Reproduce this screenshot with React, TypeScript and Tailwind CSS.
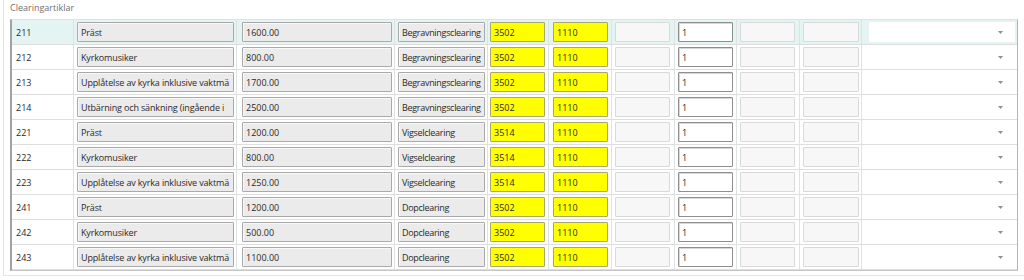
import React from "react";

type Row = { id: string; name: string; price: string; type: string; a: string; b: string };

const rows: Row[] = [
  { id: "211", name: "Präst", price: "1600.00", type: "Begravningsclearing", a: "3502", b: "1110" },
  { id: "212", name: "Kyrkomusiker", price: "800.00", type: "Begravningsclearing", a: "3502", b: "1110" },
  { id: "213", name: "Upplåtelse av kyrka inklusive vaktmä", price: "1700.00", type: "Begravningsclearing", a: "3502", b: "1110" },
  { id: "214", name: "Utbärning och sänkning (ingående i", price: "2500.00", type: "Begravningsclearing", a: "3502", b: "1110" },
  { id: "221", name: "Präst", price: "1200.00", type: "Vigselclearing", a: "3514", b: "1110" },
  { id: "222", name: "Kyrkomusiker", price: "800.00", type: "Vigselclearing", a: "3514", b: "1110" },
  { id: "223", name: "Upplåtelse av kyrka inklusive vaktmä", price: "1250.00", type: "Vigselclearing", a: "3514", b: "1110" },
  { id: "241", name: "Präst", price: "1200.00", type: "Dopclearing", a: "3502", b: "1110" },
  { id: "242", name: "Kyrkomusiker", price: "500.00", type: "Dopclearing", a: "3502", b: "1110" },
  { id: "243", name: "Upplåtelse av kyrka inklusive vaktmä", price: "1100.00", type: "Dopclearing", a: "3502", b: "1110" },
];

const grayBox =
  "h-[20px] border border-[#a9a9a9] bg-[#ebebeb] rounded-[1px] pl-[3px] flex items-center overflow-hidden whitespace-nowrap text-[#2a2a2a] shadow-[inset_1px_1px_0_#f8f8f8]";
const yellowBox =
  "h-[20px] border border-[#a8a86a] bg-[#ffff00] rounded-[1px] pl-[3px] flex items-center overflow-hidden whitespace-nowrap text-[#2a2a2a]";
const emptyBox = "h-[20px] border border-[#d9d9d9] bg-[#f7f7f7] rounded-[1px]";
const inputBox =
  "h-[20px] border border-[#8e8e8e] bg-white rounded-[1px] pl-[3px] flex items-center text-[#1e1e1e] shadow-[inset_1px_1px_0_#d8d8d8]";

const cell = "h-full flex items-center border-r border-[#dde3e3] shrink-0";

function GridRow({ r, selected }: { r: Row; selected: boolean }) {
  return (
    <div
      className={
        "flex h-[25px] border-b border-[#dedede] " + (selected ? "bg-[#e4f4f3]" : "bg-white")
      }
    >
      <div className={cell + " w-[62px] pl-[4px] text-[#2a2a2a]"}>{r.id}</div>
      <div className={cell + " w-[163px]"}>
        <div className={grayBox + " ml-[3px] w-[157px] tracking-[-0.15px]"}>{r.name}</div>
      </div>
      <div className={cell + " w-[158px]"}>
        <div className={grayBox + " ml-[5px] w-[150px]"}>{r.price}</div>
      </div>
      <div className={cell + " w-[93px]"}>
        <div className={grayBox + " ml-[3px] w-[87px] pl-[2px] tracking-[-0.3px]"}>{r.type}</div>
      </div>
      <div className={cell + " w-[61px]"}>
        <div className={yellowBox + " ml-[2px] w-[55px]"}>{r.a}</div>
      </div>
      <div className={cell + " w-[63px]"}>
        <div className={yellowBox + " ml-[4px] w-[55px]"}>{r.b}</div>
      </div>
      <div className={cell + " w-[63px]"}>
        <div className={emptyBox + " ml-[3px] w-[55px]"} />
      </div>
      <div className={cell + " w-[62px]"}>
        <div className={inputBox + " ml-[3px] w-[55px]"}>1</div>
      </div>
      <div className={cell + " w-[63px]"}>
        <div className={emptyBox + " ml-[3px] w-[55px]"} />
      </div>
      <div className={cell + " w-[62px]"}>
        <div className={emptyBox + " ml-[3px] w-[56px]"} />
      </div>
      <div className="h-full flex items-center flex-1">
        <div className="h-[20px] ml-[7px] mr-[2px] flex-1 bg-white flex items-center justify-end pr-[12px]">
          <svg width="5" height="3" viewBox="0 0 5 3">
            <path d="M0 0 H5 L2.5 3 Z" fill="#8f8f8f" />
          </svg>
        </div>
      </div>
    </div>
  );
}

export default function App() {
  return (
    <div
      className="w-[1024px] h-[280px] bg-white relative overflow-hidden text-[9px] leading-none"
      style={{ fontFamily: '"Open Sans", "Noto Sans", sans-serif' }}
    >
      <div className="h-[276px] border-b border-l border-[#e4e4e4] ml-[3px] pt-[3px]">
        <div className="pl-[6px] h-[16px] text-[#6f6f6f] text-[9px]">Clearingartiklar</div>
        <div className="ml-[6px] w-[1008px] border-t border-t-[#d4e6e6] border-l-2 border-l-[#a2a2a2] border-r border-r-[#b4b4b4] border-b border-b-[#c6c6c6]">
          {rows.map((r, i) => (
            <GridRow key={r.id} r={r} selected={i === 0} />
          ))}
        </div>
      </div>
    </div>
  );
}
